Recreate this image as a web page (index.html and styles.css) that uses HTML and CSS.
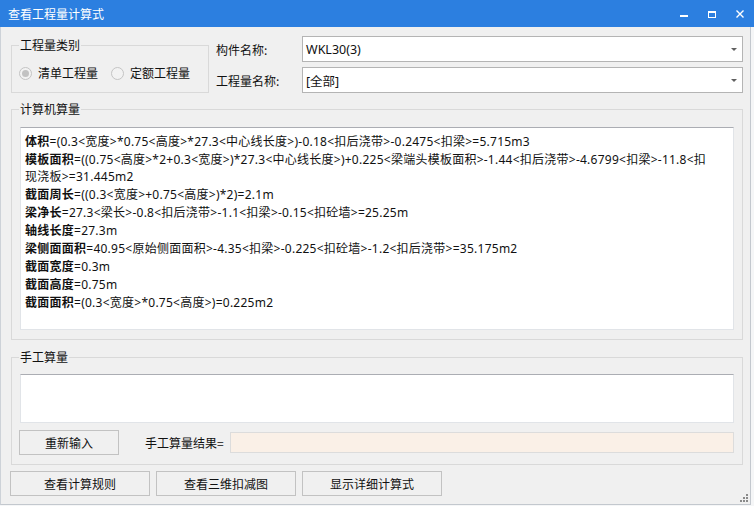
FILE: index.html
```html
<!DOCTYPE html>
<html lang="zh-CN">
<head>
<meta charset="utf-8">
<title>查看工程量计算式</title>
<link rel="stylesheet" href="styles.css">
</head>
<body>
<div class="titlebar">
  <span class="title">查看工程量计算式</span>
  <div class="controls">
    <svg class="ctl" width="28" height="27" viewBox="0 0 28 27"><rect x="10" y="15" width="8" height="2" fill="#fff"/></svg>
    <svg class="ctl" width="28" height="27" viewBox="0 0 28 27"><rect x="10.5" y="11.5" width="7" height="6" fill="none" stroke="#fff" stroke-width="1"/><rect x="10" y="11" width="8" height="2" fill="#fff"/></svg>
    <svg class="ctl" width="28" height="27" viewBox="0 0 28 27"><path d="M10.5 10.5 L17.5 17.5 M17.5 10.5 L10.5 17.5" stroke="#fff" stroke-width="1.4" fill="none"/></svg>
  </div>
</div>
<div class="frame">
  <div class="top-row">
    <fieldset class="group kind">
      <legend>工程量类别</legend>
      <div class="radios">
        <label class="radio"><span class="dot checked"></span>清单工程量</label>
        <label class="radio"><span class="dot"></span>定额工程量</label>
      </div>
    </fieldset>
    <div class="fields">
      <div class="field">
        <span class="field-label">构件名称:</span>
        <div class="combo"><span class="combo-text">WKL30(3)</span><span class="arrow"></span></div>
      </div>
      <div class="field">
        <span class="field-label">工程量名称:</span>
        <div class="combo"><span class="combo-text">[全部]</span><span class="arrow"></span></div>
      </div>
    </div>
  </div>

  <fieldset class="group calc">
    <legend>计算机算量</legend>
    <div class="textbox formula">
      <div class="line"><b>体积</b>=(0.3&lt;宽度&gt;*0.75&lt;高度&gt;*27.3&lt;中心线长度&gt;)-0.18&lt;扣后浇带&gt;-0.2475&lt;扣梁&gt;=5.715m3</div>
      <div class="line"><b>模板面积</b>=((0.75&lt;高度&gt;*2+0.3&lt;宽度&gt;)*27.3&lt;中心线长度&gt;)+0.225&lt;梁端头模板面积&gt;-1.44&lt;扣后浇带&gt;-4.6799&lt;扣梁&gt;-11.8&lt;扣</div>
      <div class="line">现浇板&gt;=31.445m2</div>
      <div class="line"><b>截面周长</b>=((0.3&lt;宽度&gt;+0.75&lt;高度&gt;)*2)=2.1m</div>
      <div class="line"><b>梁净长</b>=27.3&lt;梁长&gt;-0.8&lt;扣后浇带&gt;-1.1&lt;扣梁&gt;-0.15&lt;扣砼墙&gt;=25.25m</div>
      <div class="line"><b>轴线长度</b>=27.3m</div>
      <div class="line"><b>梁侧面面积</b>=40.95&lt;原始侧面面积&gt;-4.35&lt;扣梁&gt;-0.225&lt;扣砼墙&gt;-1.2&lt;扣后浇带&gt;=35.175m2</div>
      <div class="line"><b>截面宽度</b>=0.3m</div>
      <div class="line"><b>截面高度</b>=0.75m</div>
      <div class="line"><b>截面面积</b>=(0.3&lt;宽度&gt;*0.75&lt;高度&gt;)=0.225m2</div>
    </div>
  </fieldset>

  <fieldset class="group manual">
    <legend>手工算量</legend>
    <div class="textbox manual-input"></div>
    <div class="manual-row">
      <button class="btn btn-reset" type="button">重新输入</button>
      <span class="result-label">手工算量结果=</span>
      <div class="result-box"></div>
    </div>
  </fieldset>

  <div class="button-row">
    <button class="btn btn-wide" type="button">查看计算规则</button>
    <button class="btn btn-wide" type="button">查看三维扣减图</button>
    <button class="btn btn-wide" type="button">显示详细计算式</button>
  </div>

  <svg class="grip" width="10" height="10" viewBox="0 0 10 10">
    <rect x="7" y="1" width="2" height="2" fill="#8a8a8a"/>
    <rect x="4" y="4" width="2" height="2" fill="#8a8a8a"/>
    <rect x="7" y="4" width="2" height="2" fill="#8a8a8a"/>
    <rect x="1" y="7" width="2" height="2" fill="#8a8a8a"/>
    <rect x="4" y="7" width="2" height="2" fill="#8a8a8a"/>
    <rect x="7" y="7" width="2" height="2" fill="#8a8a8a"/>
  </svg>
</div>
</body>
</html>
```

FILE: styles.css
```css
* {
  box-sizing: border-box;
}

html {
  background: #f5f6f7;
}

body {
  margin: 0;
  width: 754px;
  height: 506px;
  overflow: hidden;
  font-family: "Noto Sans", "Noto Sans CJK SC", sans-serif;
  font-size: 12px;
  color: #111;
}

/* ---------- title bar ---------- */
.titlebar {
  height: 27px;
  background: #2c7fe0;
  display: flex;
  align-items: center;
  padding-left: 8px;
  color: #fff;
}

.title {
  font-family: "Noto Sans CJK SC", sans-serif;
  font-size: 12px;
  line-height: 16px;
  margin-top: 1px;
}

.controls {
  margin-left: auto;
  display: flex;
  align-self: stretch;
}

.ctl {
  display: block;
}

/* ---------- frame ---------- */
.frame {
  position: relative;
  width: 751px;
  height: 478px;
  background: #f0f0f0;
  border-left: 1px solid #cdd2d8;
  border-right: 1px solid #c3c8ce;
  border-bottom: 1px solid #c3c8ce;
  padding: 9px 7px 0 10px;
  display: flex;
  flex-direction: column;
}

/* ---------- groups ---------- */
.group {
  margin: 0;
  min-width: 0;
  border: 1px solid #d9d9d9;
  padding: 0 8px 9px 7px;
}

.group legend {
  padding: 0 1px;
  line-height: 16px;
  font-family: "Noto Sans CJK SC", sans-serif;
  font-size: 12px;
  color: #111;
}

.top-row {
  display: flex;
  align-items: flex-start;
}

.kind {
  width: 198px;
  margin-top: 1px;
  padding: 12px 7px 11px 7px;
}

.radios {
  display: flex;
  gap: 13px;
  height: 16px;
  align-items: center;
}

.radio {
  display: flex;
  align-items: center;
  gap: 6px;
  line-height: 16px;
  font-family: "Noto Sans CJK SC", sans-serif;
}

.dot {
  width: 13px;
  height: 13px;
  border-radius: 50%;
  border: 1px solid #c4c4c4;
  background: #f2f2f2;
  display: flex;
  align-items: center;
  justify-content: center;
}

.dot.checked::after {
  content: "";
  width: 7px;
  height: 7px;
  border-radius: 50%;
  background: #c2c2c2;
}

.fields {
  flex: 1;
  margin-left: 7px;
  display: flex;
  flex-direction: column;
  gap: 5px;
}

.field {
  display: flex;
  align-items: center;
  height: 26px;
}

.field-label {
  width: 86px;
  font-family: "Noto Sans CJK SC", sans-serif;
}

.combo {
  flex: 1;
  height: 26px;
  background: #fff;
  border: 1px solid #b4b4b4;
  display: flex;
  align-items: center;
  padding: 0 4px 0 3px;
}

.combo-text {
  flex: 1;
  font-size: 12.5px;
}

.arrow {
  width: 0;
  height: 0;
  border-left: 3px solid transparent;
  border-right: 3px solid transparent;
  border-top: 3px solid #606060;
  margin-right: 1px;
}

/* ---------- textboxes ---------- */
.textbox {
  background: #fff;
  border: 1px solid #e1e4e8;
  border-top-color: #abadb3;
  margin-left: 1px;
}

.calc {
  margin-top: 8px;
  padding-top: 10px;
}

.formula {
  height: 203px;
  padding: 4px 4px 0 4px;
  overflow: hidden;
}

.line {
  white-space: nowrap;
  line-height: 17px;
  letter-spacing: 0.25px;
}

.line b {
  font-family: "Noto Sans CJK SC", sans-serif;
  font-weight: 700;
}

.manual {
  margin-top: 9px;
  padding-top: 9px;
}

.manual-input {
  height: 49px;
}

.manual-row {
  display: flex;
  align-items: center;
  margin-top: 7px;
  height: 25px;
}

.btn {
  height: 25px;
  background: #f0f0f0;
  border: 1px solid #c2c2c2;
  font-family: "Noto Sans CJK SC", sans-serif;
  font-size: 12px;
  color: #111;
  padding: 0;
}

.btn-reset {
  width: 100px;
}

.result-label {
  margin-left: 26px;
  font-family: "Noto Sans CJK SC", sans-serif;
}

.result-box {
  flex: 1;
  height: 21px;
  margin-left: 6px;
  margin-right: 0;
  background: #faf0e7;
  border: 1px solid #dcdcdc;
}

.button-row {
  display: flex;
  gap: 6px;
  margin-top: 6px;
  margin-left: -1px;
}

.btn-wide {
  width: 140px;
}

.grip {
  position: absolute;
  right: 1px;
  bottom: 1px;
}
```
